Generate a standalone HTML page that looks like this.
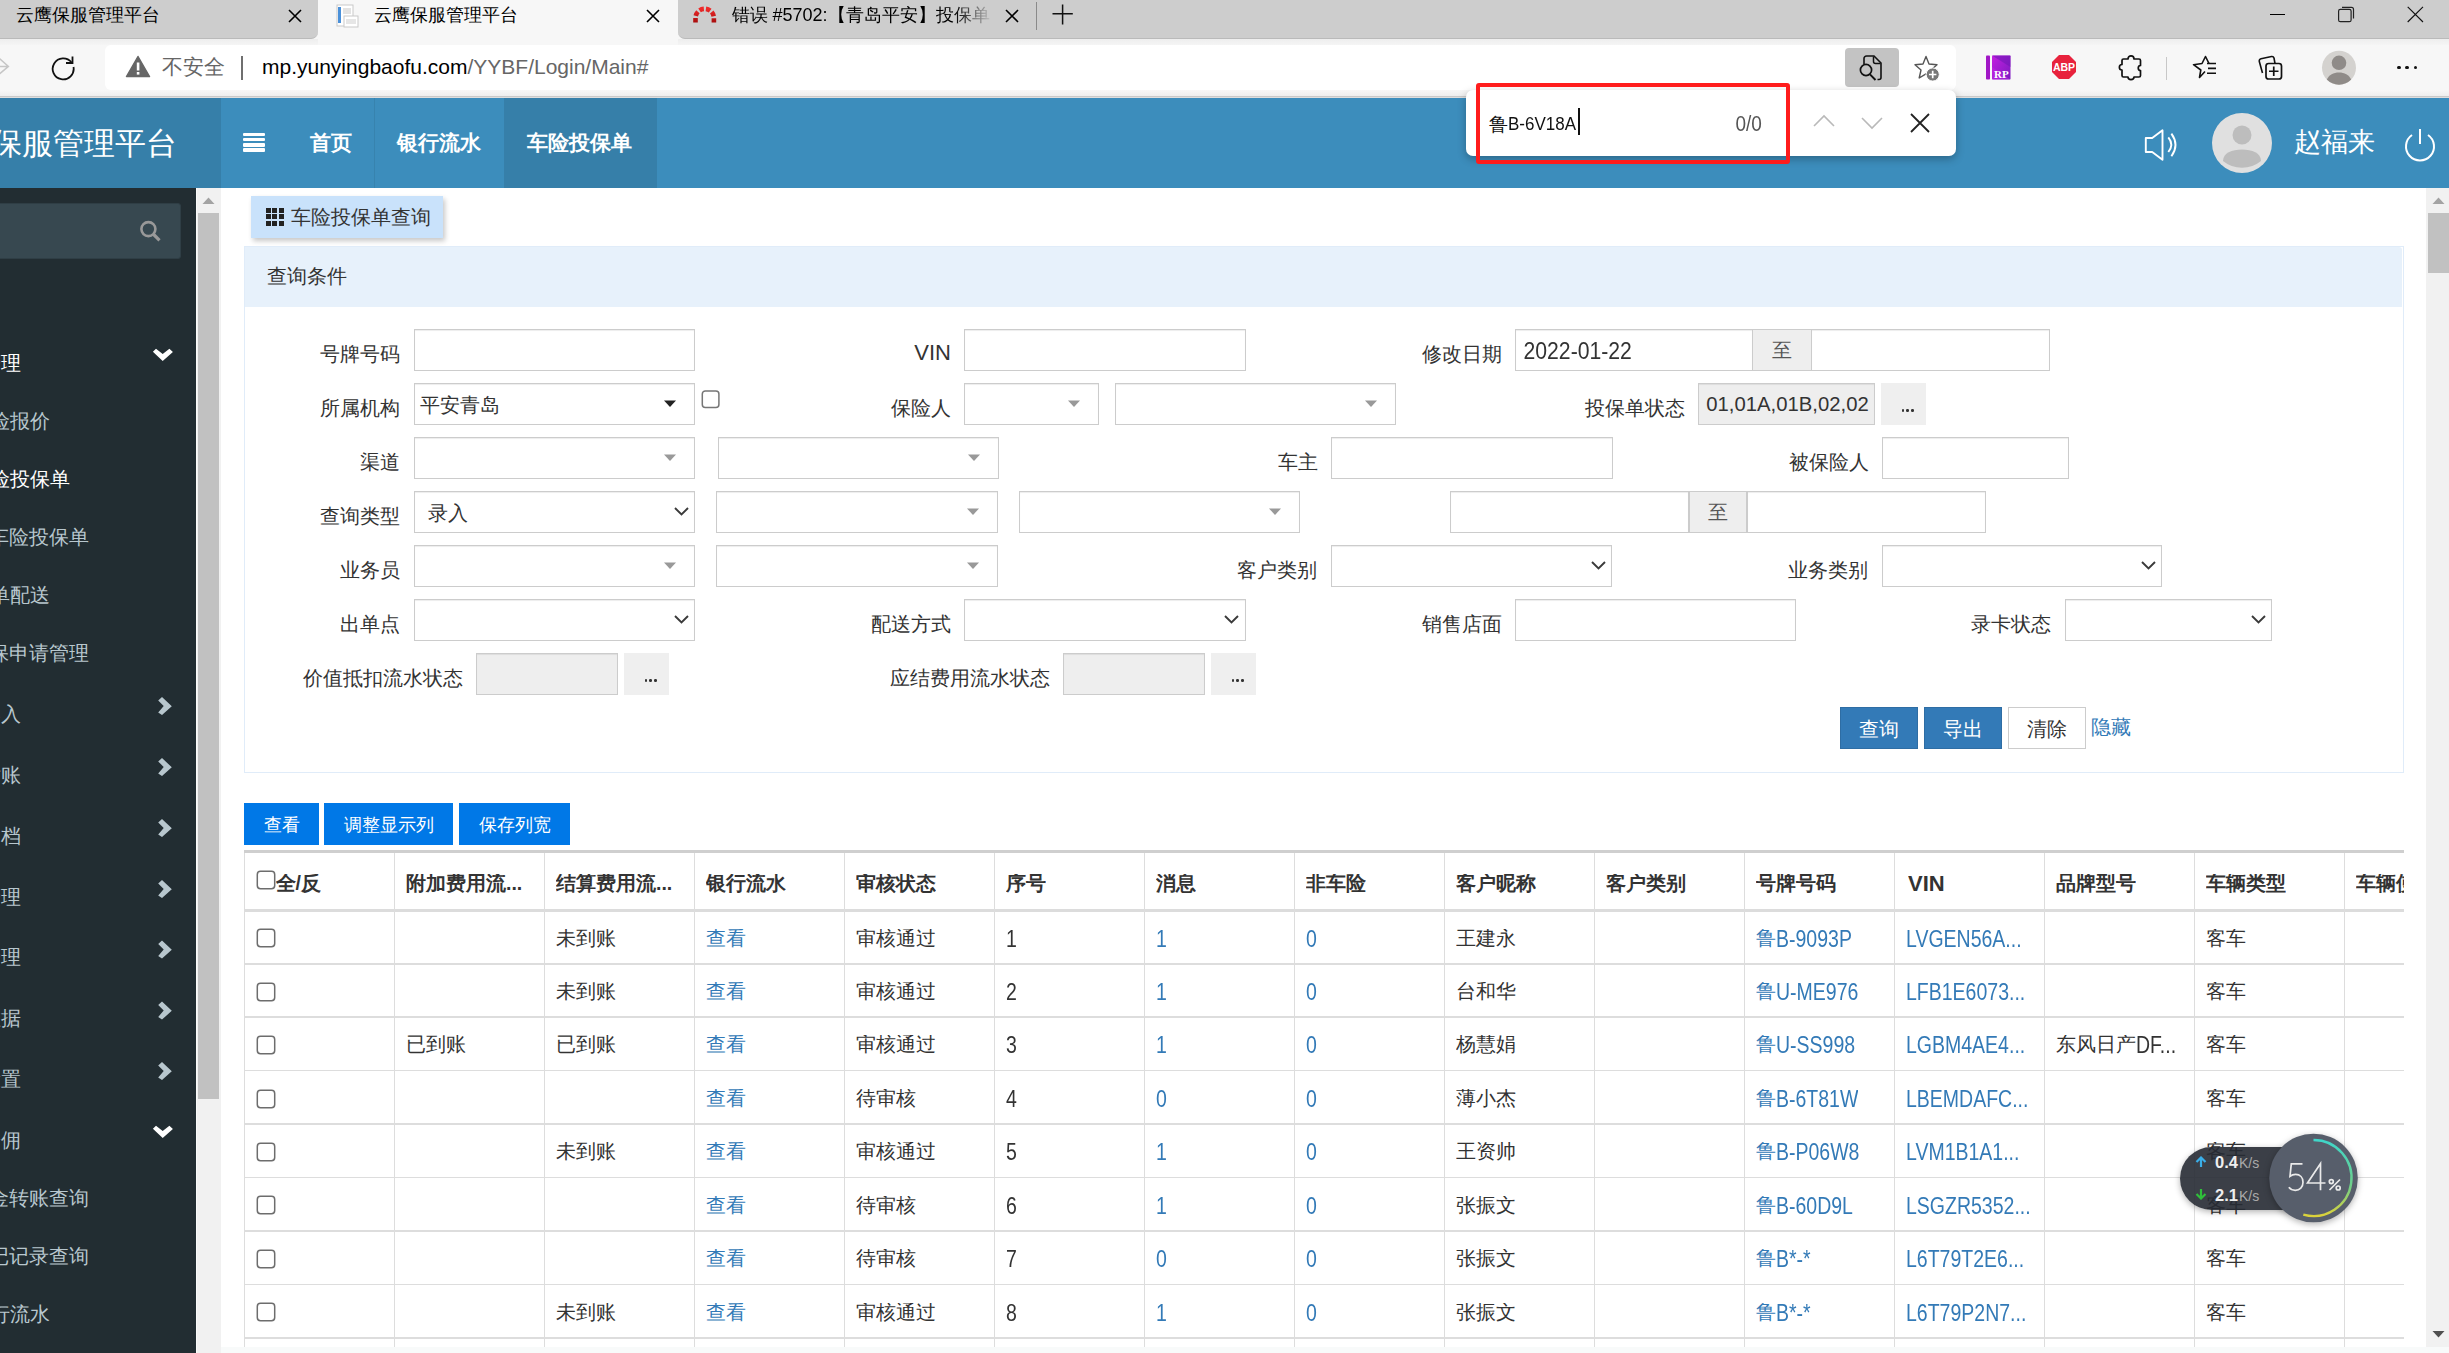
<!DOCTYPE html><html><head><meta charset="utf-8"><title>云鹰保服管理平台</title><style>
html,body{margin:0;padding:0;width:2449px;height:1353px;overflow:hidden;background:#fff;font-family:"Liberation Sans", sans-serif;}
.t{position:absolute;white-space:nowrap;}
.r{position:absolute;box-sizing:border-box;}
</style></head><body>

<div class="r" style="left:0.0px;top:0.0px;width:2449.0px;height:97.0px;background:#f7f7f7"></div>
<div class="r" style="left:0.0px;top:0.0px;width:318.0px;height:39.0px;background:#cdcdcd;border-bottom:1px solid #bababa;border-bottom-right-radius:7px"></div>
<div class="r" style="left:678.0px;top:0.0px;width:1771.0px;height:39.0px;background:#cdcdcd;border-bottom:1px solid #bababa;border-bottom-left-radius:7px"></div>
<div class="r" style="left:0.0px;top:90.0px;width:2449.0px;height:6.0px;background:linear-gradient(#f7f7f7,#eeeeee)"></div>
<div class="r" style="left:0.0px;top:39.0px;width:318.0px;height:6.0px;background:linear-gradient(#eeeeee,#f5f5f5)"></div>
<div class="r" style="left:678.0px;top:39.0px;width:1771.0px;height:6.0px;background:linear-gradient(#eeeeee,#f5f5f5)"></div>
<div class="r" style="left:0.0px;top:96.0px;width:2449.0px;height:1.0px;background:#c9c9c9"></div>
<div class="r" style="left:0.0px;top:97.0px;width:2449.0px;height:1.0px;background:#dedede"></div>
<div class="t" style="left:15.5px;top:5.5px;font-size:18px;line-height:18px;color:#000;">云鹰保服管理平台</div>
<svg class="r" style="left:288px;top:9px;" width="14" height="14" viewBox="0 0 14 14"><path d="M1 1L13 13M13 1L1 13" stroke="#000" stroke-width="1.6" fill="none"/></svg>
<svg class="r" style="left:335px;top:3px;" width="25" height="25" viewBox="0 0 25 25"><rect x="2" y="2" width="16" height="21" fill="#fff" stroke="#c9c9c9"/><rect x="3" y="4" width="3" height="16" fill="#4a90d9"/><rect x="8" y="5" width="8" height="6" fill="#e3e3e3"/><rect x="9" y="13" width="14" height="11" fill="#fff" stroke="#c9c9c9"/><rect x="11" y="16" width="10" height="5" fill="#e6e6e6"/></svg>
<div class="t" style="left:373.5px;top:5.5px;font-size:18px;line-height:18px;color:#000;">云鹰保服管理平台</div>
<svg class="r" style="left:646px;top:9px;" width="14" height="14" viewBox="0 0 14 14"><path d="M1 1L13 13M13 1L1 13" stroke="#000" stroke-width="1.6" fill="none"/></svg>
<svg class="r" style="left:691px;top:4px;" width="28" height="20" viewBox="0 0 28 20"><defs><linearGradient id="rmg" x1="0" y1="0" x2="0" y2="1"><stop offset="0" stop-color="#ee2a2a"/><stop offset="1" stop-color="#a80d0d"/></linearGradient></defs><path d="M4.5 18.5V14A9.2 9.2 0 0 1 22.9 14V18.5" stroke="url(#rmg)" stroke-width="4.6" fill="none" stroke-dasharray="4.6 2.1"/></svg>
<div class="t" style="left:731.5px;top:6.0px;font-size:18px;line-height:18px;color:#000;width:262px;overflow:hidden;-webkit-mask-image:linear-gradient(to right,#000 85%,transparent 100%);mask-image:linear-gradient(to right,#000 85%,transparent 100%)">错误 #5702:【青岛平安】投保单</div>
<svg class="r" style="left:1005px;top:9px;" width="14" height="14" viewBox="0 0 14 14"><path d="M1 1L13 13M13 1L1 13" stroke="#000" stroke-width="1.6" fill="none"/></svg>
<div class="r" style="left:1035.5px;top:2.0px;width:1.3px;height:28.0px;background:#8a8a8a"></div>
<svg class="r" style="left:1052px;top:3px;" width="22" height="22" viewBox="0 0 22 22"><path d="M10.6 1.5V21.5M0.5 10.7H20.8" stroke="#111" stroke-width="1.5" fill="none"/></svg>
<div class="r" style="left:2270.0px;top:13.6px;width:15.0px;height:1.3px;background:#000"></div>
<svg class="r" style="left:2336px;top:5px;" width="20" height="20" viewBox="0 0 20 20"><rect x="2.6" y="4.3" width="12.5" height="12.4" rx="1.8" fill="none" stroke="#222" stroke-width="1.2"/><path d="M6 2.4H15.5A2 2 0 0 1 17.5 4.4V13.5" fill="none" stroke="#222" stroke-width="1.2"/></svg>
<svg class="r" style="left:2405px;top:4px;" width="20" height="20" viewBox="0 0 20 20"><path d="M2.7 2.8L18 18M18 2.8L2.7 18" stroke="#111" stroke-width="1.15" fill="none"/></svg>
<svg class="r" style="left:0px;top:56px;" width="14" height="22" viewBox="0 0 14 22"><path d="M-1 2.2L8.4 10.4L-1 18.4M-2 10.4H8" stroke="#c6c6c6" stroke-width="1.5" fill="none"/></svg>
<svg class="r" style="left:49px;top:53px;" width="28" height="28" viewBox="0 0 28 28"><path d="M22.5 9.5A10.5 10.5 0 1 0 24.5 14" stroke="#111" stroke-width="1.8" fill="none"/><path d="M23.5 3.5V10H17" stroke="#111" stroke-width="1.8" fill="none"/></svg>
<div class="r" style="left:105.0px;top:45.0px;width:1851.0px;height:45.0px;background:#fff;border-radius:6px"></div>
<svg class="r" style="left:125px;top:55px;" width="26" height="23" viewBox="0 0 26 23"><path d="M13 1.5L24.5 21.5H1.5Z" fill="#666" stroke="#666" stroke-width="1.5" stroke-linejoin="round"/><rect x="11.8" y="7.5" width="2.6" height="8" fill="#fff"/><rect x="11.8" y="17" width="2.6" height="2.6" fill="#fff"/></svg>
<div class="t" style="left:161.5px;top:57.2px;font-size:20.5px;line-height:20.5px;color:#666;">不安全</div>
<div class="r" style="left:241.2px;top:56.0px;width:1.6px;height:24.0px;background:#6f6f6f"></div>
<div class="t" style="left:262.0px;top:56.0px;font-size:21px;line-height:21px;color:#000;"><span style="color:#000">mp.yunyingbaofu.com</span><span style="color:#666">/YYBF/Login/Main#</span></div>
<div class="r" style="left:1845.0px;top:48.0px;width:54.0px;height:38.6px;background:#c3c3c3;border-radius:4px"></div>
<svg class="r" style="left:1857px;top:54px;" width="30" height="30" viewBox="0 0 30 30"><path d="M7 10V4.5A2.5 2.5 0 0 1 9.5 2H17L24 9V23.5A2 2 0 0 1 22 25.5H20.5" stroke="#111" stroke-width="1.6" fill="none"/><path d="M16.5 2.5V7.5A2 2 0 0 0 18.5 9.5H23.5" stroke="#111" stroke-width="1.5" fill="none"/><circle cx="9" cy="16" r="5.6" stroke="#111" stroke-width="1.7" fill="none"/><path d="M13 20.3L18.5 26" stroke="#111" stroke-width="1.9" /></svg>
<svg class="r" style="left:1912px;top:53px;" width="30" height="30" viewBox="0 0 30 30"><path d="M14 3.5L17 11L25 11.8L19 17L20.8 25L14 20.8L7.2 25L9 17L3 11.8L11 11Z" fill="none" stroke="#555" stroke-width="1.4" stroke-linejoin="round"/><circle cx="20.7" cy="21.5" r="6.6" fill="#777" stroke="#fff" stroke-width="1"/><path d="M20.7 17.8V25.2M17 21.5H24.4" stroke="#fff" stroke-width="1.7"/></svg>
<svg class="r" style="left:1986px;top:55px;" width="25" height="25" viewBox="0 0 25 25"><defs><linearGradient id="rpg" x1="0" y1="0" x2="1" y2="1"><stop offset="0" stop-color="#c51fe0"/><stop offset="1" stop-color="#7a1bc0"/></linearGradient></defs><rect x="0" y="0.5" width="4" height="24" rx="0.8" fill="#a117c6"/><rect x="6" y="0.5" width="18.5" height="24" rx="0.8" fill="url(#rpg)"/><path d="M6 0.5H24.5V12Z" fill="#6e17b5" opacity=".55"/><path d="M6 12L24.5 24.5H6Z" fill="#d12cf0" opacity=".35"/><text x="8" y="23" font-family="Liberation Serif" font-weight="bold" font-size="11" fill="#fff">RP</text></svg>
<svg class="r" style="left:2051px;top:54px;" width="26" height="26" viewBox="0 0 26 26"><path d="M8 1H18L25 8V18L18 25H8L1 18V8Z" fill="#e8223d"/><text x="13" y="17.3" text-anchor="middle" font-family="Liberation Sans" font-weight="bold" font-size="10.5" fill="#fff">ABP</text></svg>
<svg class="r" style="left:2117px;top:53px;" width="28" height="28" viewBox="0 0 28 28"><path d="M11 6C11 1.8 17 1.8 17 6H22A1.5 1.5 0 0 1 23.5 7.5V12.5C20.5 12.5 20.5 17.5 23.5 17.5V22.5A1.5 1.5 0 0 1 22 24H17C17 27.5 11 27.5 11 24H6.5A1.5 1.5 0 0 1 5 22.5V17C1.5 17 1.5 11.5 5 11.5V7.5A1.5 1.5 0 0 1 6.5 6Z" fill="none" stroke="#111" stroke-width="1.7" stroke-linejoin="round"/></svg>
<div class="r" style="left:2166.2px;top:57.0px;width:1.2px;height:23.0px;background:#c8c8c8"></div>
<svg class="r" style="left:2189px;top:53px;" width="30" height="28" viewBox="0 0 30 28"><path d="M16 18.5L10.5 24.5L11.8 17L4.5 11.7L13 10.5L16.5 3.5L20 10.5" fill="none" stroke="#111" stroke-width="1.6" stroke-linejoin="round"/><path d="M18 10.5H27M19 15.4H27M18 20.2H27" stroke="#111" stroke-width="1.6"/></svg>
<svg class="r" style="left:2256px;top:54px;" width="30" height="28" viewBox="0 0 30 28"><path d="M6.5 19L3.3 7.5A2.2 2.2 0 0 1 5 4.8L15.5 2.5A2.2 2.2 0 0 1 18 4L19 9.5" fill="none" stroke="#111" stroke-width="1.6"/><rect x="10" y="9.5" width="15.5" height="15.5" rx="2.6" fill="#f7f7f7" stroke="#111" stroke-width="1.7"/><path d="M17.75 12.5V22M13 17.25H22.5" stroke="#111" stroke-width="1.7"/></svg>
<svg class="r" style="left:2321px;top:50px;" width="36" height="36" viewBox="0 0 36 36"><circle cx="18" cy="17.7" r="17" fill="#d4d2cf"/><circle cx="18" cy="12.8" r="7.3" fill="#8f8b88"/><path d="M5.8 29.5C8 25 12.5 22.5 18 22.5S28 25 30.2 29.5A17 17 0 0 1 5.8 29.5Z" fill="#8f8b88"/></svg>
<div class="r" style="left:2397.1px;top:65.6px;width:3.8px;height:3.8px;border-radius:2px;background:#111"></div>
<div class="r" style="left:2405.4px;top:65.6px;width:3.8px;height:3.8px;border-radius:2px;background:#111"></div>
<div class="r" style="left:2413.7px;top:65.6px;width:3.8px;height:3.8px;border-radius:2px;background:#111"></div>
<div class="r" style="left:0.0px;top:98.0px;width:221.0px;height:90.0px;background:#367fa9"></div>
<div class="r" style="left:221.0px;top:98.0px;width:2228.0px;height:90.0px;background:#3c8dbc"></div>
<div class="t" style="left:-423.5px;width:600px;text-align:right;top:128.2px;font-size:30.5px;line-height:30.5px;color:#fff;">云鹰保服管理平台</div>
<div class="r" style="left:243.0px;top:132.8px;width:22.0px;height:3.6px;background:#fff;border-radius:1px"></div>
<div class="r" style="left:243.0px;top:137.9px;width:22.0px;height:3.6px;background:#fff;border-radius:1px"></div>
<div class="r" style="left:243.0px;top:143.0px;width:22.0px;height:3.6px;background:#fff;border-radius:1px"></div>
<div class="r" style="left:243.0px;top:148.1px;width:22.0px;height:3.6px;background:#fff;border-radius:1px"></div>
<div class="t" style="left:309.5px;top:132.0px;font-size:21px;line-height:21px;color:#fff;font-weight:bold;">首页</div>
<div class="r" style="left:373.5px;top:98.0px;width:1.0px;height:90.0px;background:rgba(0,0,0,.07)"></div>
<div class="t" style="left:396.5px;top:132.0px;font-size:21px;line-height:21px;color:#fff;font-weight:bold;">银行流水</div>
<div class="r" style="left:504.0px;top:98.0px;width:153.0px;height:90.0px;background:#367fa9"></div>
<div class="t" style="left:526.5px;top:132.0px;font-size:21px;line-height:21px;color:#fff;font-weight:bold;">车险投保单</div>
<svg class="r" style="left:2144px;top:128px;" width="40" height="36" viewBox="0 0 40 36"><path d="M1.8 10H8.2L18.5 2.3V31.7L8.2 24H1.8Z" fill="none" stroke="#fff" stroke-width="1.9" stroke-linejoin="round"/><path d="M24.3 9.3Q30.3 16.6 24.3 24M27.4 5.6Q35.6 16.9 27.4 28.3" fill="none" stroke="#fff" stroke-width="1.9"/></svg>
<svg class="r" style="left:2212px;top:113px;" width="60" height="60" viewBox="0 0 60 60"><circle cx="30" cy="30" r="30" fill="#e0e0e0"/><circle cx="30" cy="22" r="9.5" fill="#bdbdbd"/><path d="M11 48C11 40 20 36.5 30 36.5S49 40 49 48A30 30 0 0 1 11 48Z" fill="#bdbdbd"/></svg>
<div class="t" style="left:2294.0px;top:129.0px;font-size:27px;line-height:27px;color:#fff;">赵福来</div>
<svg class="r" style="left:2403px;top:127px;" width="34" height="36" viewBox="0 0 34 36"><path d="M17 2V17" stroke="#fff" stroke-width="2" fill="none"/><path d="M9 8A14 14 0 1 0 25 8" stroke="#fff" stroke-width="2" fill="none"/></svg>
<div class="r" style="left:0.0px;top:188.0px;width:196.0px;height:1165.0px;background:#222d32"></div>
<div class="r" style="left:-10.0px;top:203.0px;width:191.0px;height:56.0px;background:#374850;border:1px solid #2f3e45;border-radius:3px"></div>
<svg class="r" style="left:136px;top:217px;" width="28" height="28" viewBox="0 0 28 28"><circle cx="12.4" cy="12.1" r="7" fill="none" stroke="#999" stroke-width="2.6"/><path d="M17.2 17L23.5 23.3" stroke="#999" stroke-width="3.2" stroke-linecap="butt"/></svg>
<div class="t" style="left:-579.4px;width:600px;text-align:right;top:353.8px;font-size:19.5px;line-height:19.5px;color:#fff;">保单管理</div>
<svg class="r" style="left:150px;top:342px;" width="26" height="24" viewBox="0 0 26 24"><polygon points="2.9,9.8 6.0,6.7 12.7,12.0 19.4,6.7 22.9,10.1 12.7,19.0" fill="#fff"/></svg>
<div class="t" style="left:-550.0px;width:600px;text-align:right;top:411.8px;font-size:19.5px;line-height:19.5px;color:#b8c7ce;">车险报价</div>
<div class="t" style="left:-530.0px;width:600px;text-align:right;top:470.2px;font-size:19.5px;line-height:19.5px;color:#fff;">车险投保单</div>
<div class="t" style="left:-511.0px;width:600px;text-align:right;top:528.2px;font-size:19.5px;line-height:19.5px;color:#b8c7ce;">非车险投保单</div>
<div class="t" style="left:-550.0px;width:600px;text-align:right;top:586.0px;font-size:19.5px;line-height:19.5px;color:#b8c7ce;">保单配送</div>
<div class="t" style="left:-511.0px;width:600px;text-align:right;top:643.8px;font-size:19.5px;line-height:19.5px;color:#b8c7ce;">退保申请管理</div>
<div class="t" style="left:-579.4px;width:600px;text-align:right;top:704.8px;font-size:19.5px;line-height:19.5px;color:#b8c7ce;">数据导入</div>
<svg class="r" style="left:150px;top:693px;" width="26" height="24" viewBox="0 0 26 24"><polygon points="8.2,7.4 12.0,4.0 21.8,13.3 12.0,22.1 8.2,19.4 13.7,13.1" fill="#b8c7ce"/></svg>
<div class="t" style="left:-579.4px;width:600px;text-align:right;top:765.8px;font-size:19.5px;line-height:19.5px;color:#b8c7ce;">财务对账</div>
<svg class="r" style="left:150px;top:754px;" width="26" height="24" viewBox="0 0 26 24"><polygon points="8.2,7.4 12.0,4.0 21.8,13.3 12.0,22.1 8.2,19.4 13.7,13.1" fill="#b8c7ce"/></svg>
<div class="t" style="left:-579.4px;width:600px;text-align:right;top:826.8px;font-size:19.5px;line-height:19.5px;color:#b8c7ce;">客户建档</div>
<svg class="r" style="left:150px;top:815px;" width="26" height="24" viewBox="0 0 26 24"><polygon points="8.2,7.4 12.0,4.0 21.8,13.3 12.0,22.1 8.2,19.4 13.7,13.1" fill="#b8c7ce"/></svg>
<div class="t" style="left:-579.4px;width:600px;text-align:right;top:887.8px;font-size:19.5px;line-height:19.5px;color:#b8c7ce;">渠道管理</div>
<svg class="r" style="left:150px;top:876px;" width="26" height="24" viewBox="0 0 26 24"><polygon points="8.2,7.4 12.0,4.0 21.8,13.3 12.0,22.1 8.2,19.4 13.7,13.1" fill="#b8c7ce"/></svg>
<div class="t" style="left:-579.4px;width:600px;text-align:right;top:948.2px;font-size:19.5px;line-height:19.5px;color:#b8c7ce;">车辆管理</div>
<svg class="r" style="left:150px;top:937px;" width="26" height="24" viewBox="0 0 26 24"><polygon points="8.2,6.9 12.0,3.5 21.8,12.8 12.0,21.6 8.2,18.9 13.7,12.6" fill="#b8c7ce"/></svg>
<div class="t" style="left:-579.4px;width:600px;text-align:right;top:1009.2px;font-size:19.5px;line-height:19.5px;color:#b8c7ce;">基础数据</div>
<svg class="r" style="left:150px;top:998px;" width="26" height="24" viewBox="0 0 26 24"><polygon points="8.2,6.9 12.0,3.5 21.8,12.8 12.0,21.6 8.2,18.9 13.7,12.6" fill="#b8c7ce"/></svg>
<div class="t" style="left:-579.4px;width:600px;text-align:right;top:1069.8px;font-size:19.5px;line-height:19.5px;color:#b8c7ce;">系统设置</div>
<svg class="r" style="left:150px;top:1058px;" width="26" height="24" viewBox="0 0 26 24"><polygon points="8.2,7.4 12.0,4.0 21.8,13.3 12.0,22.1 8.2,19.4 13.7,13.1" fill="#b8c7ce"/></svg>
<div class="t" style="left:-579.4px;width:600px;text-align:right;top:1130.8px;font-size:19.5px;line-height:19.5px;color:#b8c7ce;">分佣</div>
<svg class="r" style="left:150px;top:1119px;" width="26" height="24" viewBox="0 0 26 24"><polygon points="2.9,9.8 6.0,6.7 12.7,12.0 19.4,6.7 22.9,10.1 12.7,19.0" fill="#fff"/></svg>
<div class="t" style="left:-511.0px;width:600px;text-align:right;top:1188.8px;font-size:19.5px;line-height:19.5px;color:#b8c7ce;">资金转账查询</div>
<div class="t" style="left:-511.0px;width:600px;text-align:right;top:1246.8px;font-size:19.5px;line-height:19.5px;color:#b8c7ce;">登记记录查询</div>
<div class="t" style="left:-550.0px;width:600px;text-align:right;top:1304.8px;font-size:19.5px;line-height:19.5px;color:#b8c7ce;">银行流水</div>
<div class="r" style="left:196.0px;top:188.0px;width:25.0px;height:1165.0px;background:#f1f1f1"></div>
<div class="r" style="left:196.0px;top:188.0px;width:1.0px;height:1165.0px;background:#fafafa"></div>
<svg class="r" style="left:202px;top:196px;" width="13" height="9" viewBox="0 0 13 9"><path d="M0.5 8L6.5 1.5L12.5 8Z" fill="#a3a3a3"/></svg>
<div class="r" style="left:198.0px;top:213.0px;width:21.0px;height:886.0px;background:#c1c1c1"></div>
<div class="r" style="left:2426.0px;top:188.0px;width:23.0px;height:1159.0px;background:#f1f1f1"></div>
<svg class="r" style="left:2432px;top:196px;" width="13" height="9" viewBox="0 0 13 9"><path d="M0.5 8L6.5 1.5L12.5 8Z" fill="#a3a3a3"/></svg>
<div class="r" style="left:2428.0px;top:213.0px;width:21.0px;height:60.0px;background:#c1c1c1"></div>
<svg class="r" style="left:2432px;top:1330px;" width="13" height="9" viewBox="0 0 13 9"><path d="M0.5 1L6.5 7.5L12.5 1Z" fill="#505050"/></svg>
<div class="r" style="left:221.0px;top:1347.0px;width:2228.0px;height:6.0px;background:#f8fafa"></div>
<div class="r" style="left:251.0px;top:196.0px;width:192.0px;height:41.5px;background:#c9e2fb;box-shadow:2px 3px 5px rgba(0,0,0,.22)"></div>
<div class="r" style="left:266.0px;top:208.0px;width:4.8px;height:4.8px;background:#222"></div>
<div class="r" style="left:266.0px;top:214.4px;width:4.8px;height:4.8px;background:#222"></div>
<div class="r" style="left:266.0px;top:220.8px;width:4.8px;height:4.8px;background:#222"></div>
<div class="r" style="left:272.4px;top:208.0px;width:4.8px;height:4.8px;background:#222"></div>
<div class="r" style="left:272.4px;top:214.4px;width:4.8px;height:4.8px;background:#222"></div>
<div class="r" style="left:272.4px;top:220.8px;width:4.8px;height:4.8px;background:#222"></div>
<div class="r" style="left:278.8px;top:208.0px;width:4.8px;height:4.8px;background:#222"></div>
<div class="r" style="left:278.8px;top:214.4px;width:4.8px;height:4.8px;background:#222"></div>
<div class="r" style="left:278.8px;top:220.8px;width:4.8px;height:4.8px;background:#222"></div>
<div class="t" style="left:291.0px;top:207.8px;font-size:19.5px;line-height:19.5px;color:#333;">车险投保单查询</div>
<div class="r" style="left:244.0px;top:246.0px;width:2160.0px;height:527.0px;border:1px solid #e0ecf9;background:#fff"></div>
<div class="r" style="left:245.0px;top:247.0px;width:2157.0px;height:60.0px;background:#e7f1fb;border-top-right-radius:3px"></div>
<div class="t" style="left:266.5px;top:266.8px;font-size:19.5px;line-height:19.5px;color:#333;">查询条件</div>
<div class="t" style="left:-200.0px;width:600px;text-align:right;top:345.2px;font-size:19.5px;line-height:19.5px;color:#333;">号牌号码</div>
<div class="r" style="left:414.0px;top:329.0px;width:281.0px;height:42.0px;background:#fff;border:1px solid #ccc;box-shadow:inset 0 1px 1px rgba(0,0,0,.075)"></div>
<div class="t" style="left:351.0px;width:600px;text-align:right;top:342.0px;font-size:22px;line-height:22px;color:#333;">VIN</div>
<div class="r" style="left:964.0px;top:329.0px;width:281.6px;height:42.0px;background:#fff;border:1px solid #ccc;box-shadow:inset 0 1px 1px rgba(0,0,0,.075)"></div>
<div class="t" style="left:902.0px;width:600px;text-align:right;top:345.2px;font-size:19.5px;line-height:19.5px;color:#333;">修改日期</div>
<div class="r" style="left:1515.0px;top:329.0px;width:238.0px;height:42.0px;background:#fff;border:1px solid #ccc;box-shadow:inset 0 1px 1px rgba(0,0,0,.075)"></div>
<div class="r" style="left:1752.0px;top:329.0px;width:60.0px;height:42.0px;background:#eee;border:1px solid #ccc"></div>
<div class="t" style="left:1482.0px;width:600px;text-align:center;top:341.2px;font-size:19.5px;line-height:19.5px;color:#555;">至</div>
<div class="r" style="left:1811.0px;top:329.0px;width:239.0px;height:42.0px;background:#fff;border:1px solid #ccc;box-shadow:inset 0 1px 1px rgba(0,0,0,.075)"></div>
<div class="t" style="left:1523.5px;top:339.4px;font-size:21.2px;line-height:21.2px;color:#333;"><span style="display:inline-block;transform:scaleY(1.15);transform-origin:0 3px">2022-01-22</span></div>
<div class="t" style="left:-200.0px;width:600px;text-align:right;top:399.2px;font-size:19.5px;line-height:19.5px;color:#333;">所属机构</div>
<div class="r" style="left:414.0px;top:383.0px;width:281.0px;height:42.0px;background:#fff;border:1px solid #ccc;box-shadow:inset 0 1px 1px rgba(0,0,0,.075)"></div>
<svg class="r" style="left:663px;top:399px;" width="13" height="9" viewBox="0 0 13 9"><path d="M1 1.5H13L7 8Z" fill="#222"/></svg>
<div class="t" style="left:420.0px;top:395.8px;font-size:19.5px;line-height:19.5px;color:#333;">平安青岛</div>
<svg class="r" style="left:701px;top:390px;" width="19" height="19" viewBox="0 0 19 19"><rect x="1.3" y="0.9" width="16.6" height="16.6" rx="3" fill="#fff" stroke="#767676" stroke-width="1.5"/></svg>
<div class="t" style="left:350.7px;width:600px;text-align:right;top:399.2px;font-size:19.5px;line-height:19.5px;color:#333;">保险人</div>
<div class="r" style="left:964.0px;top:383.0px;width:134.6px;height:42.0px;background:#fff;border:1px solid #ccc;box-shadow:inset 0 1px 1px rgba(0,0,0,.075)"></div>
<svg class="r" style="left:1067px;top:399px;" width="13" height="9" viewBox="0 0 13 9"><path d="M1 1.5H13L7 8Z" fill="#999"/></svg>
<div class="r" style="left:1115.3px;top:383.0px;width:280.3px;height:42.0px;background:#fff;border:1px solid #ccc;box-shadow:inset 0 1px 1px rgba(0,0,0,.075)"></div>
<svg class="r" style="left:1364px;top:399px;" width="13" height="9" viewBox="0 0 13 9"><path d="M1 1.5H13L7 8Z" fill="#999"/></svg>
<div class="t" style="left:1085.0px;width:600px;text-align:right;top:399.2px;font-size:19.5px;line-height:19.5px;color:#333;">投保单状态</div>
<div class="r" style="left:1698.0px;top:383.0px;width:177.0px;height:42.0px;background:#eee;border:1px solid #ccc;box-shadow:inset 0 1px 1px rgba(0,0,0,.075)"></div>
<div class="t" style="left:1706.3px;top:394.4px;font-size:20.3px;line-height:20.3px;color:#333;">01,01A,01B,02,02</div>
<div class="r" style="left:1881.0px;top:383.0px;width:45.0px;height:42.0px;background:#efefef"></div>
<div class="r" style="left:1901.6px;top:408.9px;width:2.5px;height:3.0px;background:#333;border-radius:1.2px"></div>
<div class="r" style="left:1906.4px;top:408.9px;width:2.5px;height:3.0px;background:#333;border-radius:1.2px"></div>
<div class="r" style="left:1911.2px;top:408.9px;width:2.5px;height:3.0px;background:#333;border-radius:1.2px"></div>
<div class="t" style="left:-200.0px;width:600px;text-align:right;top:453.2px;font-size:19.5px;line-height:19.5px;color:#333;">渠道</div>
<div class="r" style="left:414.0px;top:437.0px;width:281.0px;height:42.0px;background:#fff;border:1px solid #ccc;box-shadow:inset 0 1px 1px rgba(0,0,0,.075)"></div>
<svg class="r" style="left:663px;top:453px;" width="13" height="9" viewBox="0 0 13 9"><path d="M1 1.5H13L7 8Z" fill="#999"/></svg>
<div class="r" style="left:718.0px;top:437.0px;width:280.7px;height:42.0px;background:#fff;border:1px solid #ccc;box-shadow:inset 0 1px 1px rgba(0,0,0,.075)"></div>
<svg class="r" style="left:967px;top:453px;" width="13" height="9" viewBox="0 0 13 9"><path d="M1 1.5H13L7 8Z" fill="#999"/></svg>
<div class="t" style="left:717.5px;width:600px;text-align:right;top:453.2px;font-size:19.5px;line-height:19.5px;color:#333;">车主</div>
<div class="r" style="left:1331.0px;top:437.0px;width:281.8px;height:42.0px;background:#fff;border:1px solid #ccc;box-shadow:inset 0 1px 1px rgba(0,0,0,.075)"></div>
<div class="t" style="left:1268.5px;width:600px;text-align:right;top:453.2px;font-size:19.5px;line-height:19.5px;color:#333;">被保险人</div>
<div class="r" style="left:1882.0px;top:437.0px;width:186.6px;height:42.0px;background:#fff;border:1px solid #ccc;box-shadow:inset 0 1px 1px rgba(0,0,0,.075)"></div>
<div class="t" style="left:-200.0px;width:600px;text-align:right;top:507.2px;font-size:19.5px;line-height:19.5px;color:#333;">查询类型</div>
<div class="r" style="left:414.0px;top:491.0px;width:281.0px;height:42.0px;background:#fff;border:1px solid #ccc;box-shadow:inset 0 1px 1px rgba(0,0,0,.075)"></div>
<svg class="r" style="left:674px;top:506px;" width="15" height="11" viewBox="0 0 15 11"><path d="M1 2L7.5 8.5L14 2" fill="none" stroke="#3a3a3a" stroke-width="1.9"/></svg>
<div class="t" style="left:427.5px;top:504.2px;font-size:19.5px;line-height:19.5px;color:#333;">录入</div>
<div class="r" style="left:716.0px;top:491.0px;width:281.7px;height:42.0px;background:#fff;border:1px solid #ccc;box-shadow:inset 0 1px 1px rgba(0,0,0,.075)"></div>
<svg class="r" style="left:966px;top:507px;" width="13" height="9" viewBox="0 0 13 9"><path d="M1 1.5H13L7 8Z" fill="#999"/></svg>
<div class="r" style="left:1019.0px;top:491.0px;width:281.0px;height:42.0px;background:#fff;border:1px solid #ccc;box-shadow:inset 0 1px 1px rgba(0,0,0,.075)"></div>
<svg class="r" style="left:1268px;top:507px;" width="13" height="9" viewBox="0 0 13 9"><path d="M1 1.5H13L7 8Z" fill="#999"/></svg>
<div class="r" style="left:1450.3px;top:491.0px;width:238.7px;height:42.0px;background:#fff;border:1px solid #ccc;box-shadow:inset 0 1px 1px rgba(0,0,0,.075)"></div>
<div class="r" style="left:1688.7px;top:491.0px;width:58.6px;height:42.0px;background:#eee;border:1px solid #ccc"></div>
<div class="t" style="left:1418.0px;width:600px;text-align:center;top:503.2px;font-size:19.5px;line-height:19.5px;color:#555;">至</div>
<div class="r" style="left:1747.0px;top:491.0px;width:238.7px;height:42.0px;background:#fff;border:1px solid #ccc;box-shadow:inset 0 1px 1px rgba(0,0,0,.075)"></div>
<div class="t" style="left:-200.0px;width:600px;text-align:right;top:561.2px;font-size:19.5px;line-height:19.5px;color:#333;">业务员</div>
<div class="r" style="left:414.0px;top:545.0px;width:281.0px;height:42.0px;background:#fff;border:1px solid #ccc;box-shadow:inset 0 1px 1px rgba(0,0,0,.075)"></div>
<svg class="r" style="left:663px;top:561px;" width="13" height="9" viewBox="0 0 13 9"><path d="M1 1.5H13L7 8Z" fill="#999"/></svg>
<div class="r" style="left:716.0px;top:545.0px;width:281.7px;height:42.0px;background:#fff;border:1px solid #ccc;box-shadow:inset 0 1px 1px rgba(0,0,0,.075)"></div>
<svg class="r" style="left:966px;top:561px;" width="13" height="9" viewBox="0 0 13 9"><path d="M1 1.5H13L7 8Z" fill="#999"/></svg>
<div class="t" style="left:717.3px;width:600px;text-align:right;top:561.2px;font-size:19.5px;line-height:19.5px;color:#333;">客户类别</div>
<div class="r" style="left:1331.3px;top:545.0px;width:281.2px;height:42.0px;background:#fff;border:1px solid #ccc;box-shadow:inset 0 1px 1px rgba(0,0,0,.075)"></div>
<svg class="r" style="left:1591px;top:560px;" width="15" height="11" viewBox="0 0 15 11"><path d="M1 2L7.5 8.5L14 2" fill="none" stroke="#3a3a3a" stroke-width="1.9"/></svg>
<div class="t" style="left:1268.0px;width:600px;text-align:right;top:561.2px;font-size:19.5px;line-height:19.5px;color:#333;">业务类别</div>
<div class="r" style="left:1882.0px;top:545.0px;width:280.4px;height:42.0px;background:#fff;border:1px solid #ccc;box-shadow:inset 0 1px 1px rgba(0,0,0,.075)"></div>
<svg class="r" style="left:2141px;top:560px;" width="15" height="11" viewBox="0 0 15 11"><path d="M1 2L7.5 8.5L14 2" fill="none" stroke="#3a3a3a" stroke-width="1.9"/></svg>
<div class="t" style="left:-200.0px;width:600px;text-align:right;top:615.2px;font-size:19.5px;line-height:19.5px;color:#333;">出单点</div>
<div class="r" style="left:414.0px;top:599.0px;width:281.0px;height:42.0px;background:#fff;border:1px solid #ccc;box-shadow:inset 0 1px 1px rgba(0,0,0,.075)"></div>
<svg class="r" style="left:674px;top:614px;" width="15" height="11" viewBox="0 0 15 11"><path d="M1 2L7.5 8.5L14 2" fill="none" stroke="#3a3a3a" stroke-width="1.9"/></svg>
<div class="t" style="left:350.7px;width:600px;text-align:right;top:615.2px;font-size:19.5px;line-height:19.5px;color:#333;">配送方式</div>
<div class="r" style="left:964.0px;top:599.0px;width:281.8px;height:42.0px;background:#fff;border:1px solid #ccc;box-shadow:inset 0 1px 1px rgba(0,0,0,.075)"></div>
<svg class="r" style="left:1224px;top:614px;" width="15" height="11" viewBox="0 0 15 11"><path d="M1 2L7.5 8.5L14 2" fill="none" stroke="#3a3a3a" stroke-width="1.9"/></svg>
<div class="t" style="left:901.8px;width:600px;text-align:right;top:615.2px;font-size:19.5px;line-height:19.5px;color:#333;">销售店面</div>
<div class="r" style="left:1515.3px;top:599.0px;width:280.4px;height:42.0px;background:#fff;border:1px solid #ccc;box-shadow:inset 0 1px 1px rgba(0,0,0,.075)"></div>
<div class="t" style="left:1451.2px;width:600px;text-align:right;top:615.2px;font-size:19.5px;line-height:19.5px;color:#333;">录卡状态</div>
<div class="r" style="left:2065.2px;top:599.0px;width:207.1px;height:42.0px;background:#fff;border:1px solid #ccc;box-shadow:inset 0 1px 1px rgba(0,0,0,.075)"></div>
<svg class="r" style="left:2251px;top:614px;" width="15" height="11" viewBox="0 0 15 11"><path d="M1 2L7.5 8.5L14 2" fill="none" stroke="#3a3a3a" stroke-width="1.9"/></svg>
<div class="t" style="left:-137.0px;width:600px;text-align:right;top:669.2px;font-size:19.5px;line-height:19.5px;color:#333;">价值抵扣流水状态</div>
<div class="r" style="left:476.3px;top:653.0px;width:141.5px;height:42.0px;background:#eee;border:1px solid #ccc;box-shadow:inset 0 1px 1px rgba(0,0,0,.075)"></div>
<div class="r" style="left:624.0px;top:653.0px;width:44.7px;height:42.0px;background:#efefef"></div>
<div class="r" style="left:644.6px;top:678.9px;width:2.5px;height:3.0px;background:#333;border-radius:1.2px"></div>
<div class="r" style="left:649.4px;top:678.9px;width:2.5px;height:3.0px;background:#333;border-radius:1.2px"></div>
<div class="r" style="left:654.2px;top:678.9px;width:2.5px;height:3.0px;background:#333;border-radius:1.2px"></div>
<div class="t" style="left:449.7px;width:600px;text-align:right;top:669.2px;font-size:19.5px;line-height:19.5px;color:#333;">应结费用流水状态</div>
<div class="r" style="left:1063.0px;top:653.0px;width:142.0px;height:42.0px;background:#eee;border:1px solid #ccc;box-shadow:inset 0 1px 1px rgba(0,0,0,.075)"></div>
<div class="r" style="left:1211.0px;top:653.0px;width:45.0px;height:42.0px;background:#efefef"></div>
<div class="r" style="left:1231.6px;top:678.9px;width:2.5px;height:3.0px;background:#333;border-radius:1.2px"></div>
<div class="r" style="left:1236.4px;top:678.9px;width:2.5px;height:3.0px;background:#333;border-radius:1.2px"></div>
<div class="r" style="left:1241.2px;top:678.9px;width:2.5px;height:3.0px;background:#333;border-radius:1.2px"></div>
<div class="r" style="left:1840.0px;top:707.0px;width:78.0px;height:41.5px;background:#337ab7;border:1px solid #2e6da4"></div>
<div class="t" style="left:1579.0px;width:600px;text-align:center;top:719.8px;font-size:19.5px;line-height:19.5px;color:#fff;">查询</div>
<div class="r" style="left:1924.0px;top:707.0px;width:77.5px;height:41.5px;background:#337ab7;border:1px solid #2e6da4"></div>
<div class="t" style="left:1662.7px;width:600px;text-align:center;top:719.8px;font-size:19.5px;line-height:19.5px;color:#fff;">导出</div>
<div class="r" style="left:2008.0px;top:707.0px;width:77.5px;height:41.5px;background:#fff;border:1px solid #ccc"></div>
<div class="t" style="left:1746.7px;width:600px;text-align:center;top:719.8px;font-size:19.5px;line-height:19.5px;color:#333;">清除</div>
<div class="t" style="left:2090.5px;top:717.8px;font-size:19.5px;line-height:19.5px;color:#337ab7;">隐藏</div>
<div class="r" style="left:244.0px;top:803.0px;width:75.0px;height:42.0px;background:#0078e7"></div>
<div class="t" style="left:-18.5px;width:600px;text-align:center;top:815.5px;font-size:18px;line-height:18px;color:#fff;">查看</div>
<div class="r" style="left:324.0px;top:803.0px;width:129.0px;height:42.0px;background:#0078e7"></div>
<div class="t" style="left:88.5px;width:600px;text-align:center;top:815.5px;font-size:18px;line-height:18px;color:#fff;">调整显示列</div>
<div class="r" style="left:459.0px;top:803.0px;width:111.0px;height:42.0px;background:#0078e7"></div>
<div class="t" style="left:214.5px;width:600px;text-align:center;top:815.5px;font-size:18px;line-height:18px;color:#fff;">保存列宽</div>
<div class="r" style="left:244px;top:850px;width:2160px;height:497px;overflow:hidden">
<div class="r" style="left:0.0px;top:0.0px;width:2160.0px;height:3.0px;background:#cfcfcf"></div>
<div class="r" style="left:0.0px;top:59.0px;width:2160.0px;height:3.0px;background:#dcdcdc"></div>
<div class="r" style="left:0.0px;top:113.0px;width:2160.0px;height:1.5px;background:#dddddd"></div>
<div class="r" style="left:0.0px;top:166.4px;width:2160.0px;height:1.5px;background:#dddddd"></div>
<div class="r" style="left:0.0px;top:219.9px;width:2160.0px;height:1.5px;background:#dddddd"></div>
<div class="r" style="left:0.0px;top:273.3px;width:2160.0px;height:1.5px;background:#dddddd"></div>
<div class="r" style="left:0.0px;top:326.7px;width:2160.0px;height:1.5px;background:#dddddd"></div>
<div class="r" style="left:0.0px;top:380.2px;width:2160.0px;height:1.5px;background:#dddddd"></div>
<div class="r" style="left:0.0px;top:433.6px;width:2160.0px;height:1.5px;background:#dddddd"></div>
<div class="r" style="left:0.0px;top:487.0px;width:2160.0px;height:1.5px;background:#dddddd"></div>
<div class="r" style="left:0.0px;top:3.0px;width:1.2px;height:494.0px;background:#dddddd"></div>
<div class="r" style="left:150.0px;top:3.0px;width:1.2px;height:494.0px;background:#dddddd"></div>
<div class="r" style="left:300.0px;top:3.0px;width:1.2px;height:494.0px;background:#dddddd"></div>
<div class="r" style="left:450.0px;top:3.0px;width:1.2px;height:494.0px;background:#dddddd"></div>
<div class="r" style="left:600.0px;top:3.0px;width:1.2px;height:494.0px;background:#dddddd"></div>
<div class="r" style="left:750.0px;top:3.0px;width:1.2px;height:494.0px;background:#dddddd"></div>
<div class="r" style="left:900.0px;top:3.0px;width:1.2px;height:494.0px;background:#dddddd"></div>
<div class="r" style="left:1050.0px;top:3.0px;width:1.2px;height:494.0px;background:#dddddd"></div>
<div class="r" style="left:1200.0px;top:3.0px;width:1.2px;height:494.0px;background:#dddddd"></div>
<div class="r" style="left:1350.0px;top:3.0px;width:1.2px;height:494.0px;background:#dddddd"></div>
<div class="r" style="left:1500.0px;top:3.0px;width:1.2px;height:494.0px;background:#dddddd"></div>
<div class="r" style="left:1650.0px;top:3.0px;width:1.2px;height:494.0px;background:#dddddd"></div>
<div class="r" style="left:1800.0px;top:3.0px;width:1.2px;height:494.0px;background:#dddddd"></div>
<div class="r" style="left:1950.0px;top:3.0px;width:1.2px;height:494.0px;background:#dddddd"></div>
<div class="r" style="left:2100.0px;top:3.0px;width:1.2px;height:494.0px;background:#dddddd"></div>
</div>
<svg class="r" style="left:256px;top:870px;" width="20" height="20" viewBox="0 0 20 20"><rect x="1.3" y="1.3" width="17.4" height="17.4" rx="3.2" fill="#fff" stroke="#6d6d6d" stroke-width="1.5"/></svg>
<div class="t" style="left:275.5px;top:874.2px;font-size:19.5px;line-height:19.5px;color:#333;font-weight:bold;max-width:2128.5px;overflow:hidden">全/反</div>
<div class="t" style="left:406.0px;top:874.2px;font-size:19.5px;line-height:19.5px;color:#333;font-weight:bold;max-width:1998.0px;overflow:hidden">附加费用流...</div>
<div class="t" style="left:556.0px;top:874.2px;font-size:19.5px;line-height:19.5px;color:#333;font-weight:bold;max-width:1848.0px;overflow:hidden">结算费用流...</div>
<div class="t" style="left:706.0px;top:874.2px;font-size:19.5px;line-height:19.5px;color:#333;font-weight:bold;max-width:1698.0px;overflow:hidden">银行流水</div>
<div class="t" style="left:856.0px;top:874.2px;font-size:19.5px;line-height:19.5px;color:#333;font-weight:bold;max-width:1548.0px;overflow:hidden">审核状态</div>
<div class="t" style="left:1006.0px;top:874.2px;font-size:19.5px;line-height:19.5px;color:#333;font-weight:bold;max-width:1398.0px;overflow:hidden">序号</div>
<div class="t" style="left:1156.0px;top:874.2px;font-size:19.5px;line-height:19.5px;color:#333;font-weight:bold;max-width:1248.0px;overflow:hidden">消息</div>
<div class="t" style="left:1306.0px;top:874.2px;font-size:19.5px;line-height:19.5px;color:#333;font-weight:bold;max-width:1098.0px;overflow:hidden">非车险</div>
<div class="t" style="left:1456.0px;top:874.2px;font-size:19.5px;line-height:19.5px;color:#333;font-weight:bold;max-width:948.0px;overflow:hidden">客户昵称</div>
<div class="t" style="left:1606.0px;top:874.2px;font-size:19.5px;line-height:19.5px;color:#333;font-weight:bold;max-width:798.0px;overflow:hidden">客户类别</div>
<div class="t" style="left:1756.0px;top:874.2px;font-size:19.5px;line-height:19.5px;color:#333;font-weight:bold;max-width:648.0px;overflow:hidden">号牌号码</div>
<div class="t" style="left:1908.0px;top:873.0px;font-size:22px;line-height:22px;color:#333;font-weight:bold;max-width:496.0px;overflow:hidden">VIN</div>
<div class="t" style="left:2056.0px;top:874.2px;font-size:19.5px;line-height:19.5px;color:#333;font-weight:bold;max-width:348.0px;overflow:hidden">品牌型号</div>
<div class="t" style="left:2206.0px;top:874.2px;font-size:19.5px;line-height:19.5px;color:#333;font-weight:bold;max-width:198.0px;overflow:hidden">车辆类型</div>
<div class="t" style="left:2356.0px;top:874.2px;font-size:19.5px;line-height:19.5px;color:#333;font-weight:bold;max-width:48.0px;overflow:hidden">车辆使用性质</div>
<svg class="r" style="left:256px;top:928px;" width="20" height="20" viewBox="0 0 20 20"><rect x="1.3" y="1.3" width="17.4" height="17.4" rx="3.2" fill="#fff" stroke="#6d6d6d" stroke-width="1.5"/></svg>
<div class="t" style="left:556.0px;top:928.5px;font-size:19.5px;line-height:19.5px;color:#333;max-width:1848.0px;overflow:hidden">未到账</div>
<div class="t" style="left:706.0px;top:928.5px;font-size:19.5px;line-height:19.5px;color:#337ab7;max-width:1698.0px;overflow:hidden">查看</div>
<div class="t" style="left:856.0px;top:928.5px;font-size:19.5px;line-height:19.5px;color:#333;max-width:1548.0px;overflow:hidden">审核通过</div>
<div class="t" style="left:1006.0px;top:928.5px;font-size:19.5px;line-height:19.5px;color:#333;max-width:1398.0px;overflow:hidden"><span style="display:inline-block;transform:scaleY(1.18);transform-origin:0 3px">1</span></div>
<div class="t" style="left:1156.0px;top:928.5px;font-size:19.5px;line-height:19.5px;color:#337ab7;max-width:1248.0px;overflow:hidden"><span style="display:inline-block;transform:scaleY(1.18);transform-origin:0 3px">1</span></div>
<div class="t" style="left:1306.0px;top:928.5px;font-size:19.5px;line-height:19.5px;color:#337ab7;max-width:1098.0px;overflow:hidden"><span style="display:inline-block;transform:scaleY(1.18);transform-origin:0 3px">0</span></div>
<div class="t" style="left:1456.0px;top:928.5px;font-size:19.5px;line-height:19.5px;color:#333;max-width:948.0px;overflow:hidden">王建永</div>
<div class="t" style="left:1756.0px;top:928.5px;font-size:19.5px;line-height:19.5px;color:#337ab7;max-width:648.0px;overflow:hidden">鲁<span style="display:inline-block;transform:scaleY(1.18);transform-origin:0 3px">B-9093P</span></div>
<div class="t" style="left:1906.0px;top:928.5px;font-size:19.5px;line-height:19.5px;color:#337ab7;max-width:498.0px;overflow:hidden"><span style="display:inline-block;transform:scaleY(1.18);transform-origin:0 3px">LVGEN56A...</span></div>
<div class="t" style="left:2206.0px;top:928.5px;font-size:19.5px;line-height:19.5px;color:#333;max-width:198.0px;overflow:hidden">客车</div>
<svg class="r" style="left:256px;top:982px;" width="20" height="20" viewBox="0 0 20 20"><rect x="1.3" y="1.3" width="17.4" height="17.4" rx="3.2" fill="#fff" stroke="#6d6d6d" stroke-width="1.5"/></svg>
<div class="t" style="left:556.0px;top:982.0px;font-size:19.5px;line-height:19.5px;color:#333;max-width:1848.0px;overflow:hidden">未到账</div>
<div class="t" style="left:706.0px;top:982.0px;font-size:19.5px;line-height:19.5px;color:#337ab7;max-width:1698.0px;overflow:hidden">查看</div>
<div class="t" style="left:856.0px;top:982.0px;font-size:19.5px;line-height:19.5px;color:#333;max-width:1548.0px;overflow:hidden">审核通过</div>
<div class="t" style="left:1006.0px;top:982.0px;font-size:19.5px;line-height:19.5px;color:#333;max-width:1398.0px;overflow:hidden"><span style="display:inline-block;transform:scaleY(1.18);transform-origin:0 3px">2</span></div>
<div class="t" style="left:1156.0px;top:982.0px;font-size:19.5px;line-height:19.5px;color:#337ab7;max-width:1248.0px;overflow:hidden"><span style="display:inline-block;transform:scaleY(1.18);transform-origin:0 3px">1</span></div>
<div class="t" style="left:1306.0px;top:982.0px;font-size:19.5px;line-height:19.5px;color:#337ab7;max-width:1098.0px;overflow:hidden"><span style="display:inline-block;transform:scaleY(1.18);transform-origin:0 3px">0</span></div>
<div class="t" style="left:1456.0px;top:982.0px;font-size:19.5px;line-height:19.5px;color:#333;max-width:948.0px;overflow:hidden">台和华</div>
<div class="t" style="left:1756.0px;top:982.0px;font-size:19.5px;line-height:19.5px;color:#337ab7;max-width:648.0px;overflow:hidden">鲁<span style="display:inline-block;transform:scaleY(1.18);transform-origin:0 3px">U-ME976</span></div>
<div class="t" style="left:1906.0px;top:982.0px;font-size:19.5px;line-height:19.5px;color:#337ab7;max-width:498.0px;overflow:hidden"><span style="display:inline-block;transform:scaleY(1.18);transform-origin:0 3px">LFB1E6073...</span></div>
<div class="t" style="left:2206.0px;top:982.0px;font-size:19.5px;line-height:19.5px;color:#333;max-width:198.0px;overflow:hidden">客车</div>
<svg class="r" style="left:256px;top:1035px;" width="20" height="20" viewBox="0 0 20 20"><rect x="1.3" y="1.3" width="17.4" height="17.4" rx="3.2" fill="#fff" stroke="#6d6d6d" stroke-width="1.5"/></svg>
<div class="t" style="left:406.0px;top:1035.4px;font-size:19.5px;line-height:19.5px;color:#333;max-width:1998.0px;overflow:hidden">已到账</div>
<div class="t" style="left:556.0px;top:1035.4px;font-size:19.5px;line-height:19.5px;color:#333;max-width:1848.0px;overflow:hidden">已到账</div>
<div class="t" style="left:706.0px;top:1035.4px;font-size:19.5px;line-height:19.5px;color:#337ab7;max-width:1698.0px;overflow:hidden">查看</div>
<div class="t" style="left:856.0px;top:1035.4px;font-size:19.5px;line-height:19.5px;color:#333;max-width:1548.0px;overflow:hidden">审核通过</div>
<div class="t" style="left:1006.0px;top:1035.4px;font-size:19.5px;line-height:19.5px;color:#333;max-width:1398.0px;overflow:hidden"><span style="display:inline-block;transform:scaleY(1.18);transform-origin:0 3px">3</span></div>
<div class="t" style="left:1156.0px;top:1035.4px;font-size:19.5px;line-height:19.5px;color:#337ab7;max-width:1248.0px;overflow:hidden"><span style="display:inline-block;transform:scaleY(1.18);transform-origin:0 3px">1</span></div>
<div class="t" style="left:1306.0px;top:1035.4px;font-size:19.5px;line-height:19.5px;color:#337ab7;max-width:1098.0px;overflow:hidden"><span style="display:inline-block;transform:scaleY(1.18);transform-origin:0 3px">0</span></div>
<div class="t" style="left:1456.0px;top:1035.4px;font-size:19.5px;line-height:19.5px;color:#333;max-width:948.0px;overflow:hidden">杨慧娟</div>
<div class="t" style="left:1756.0px;top:1035.4px;font-size:19.5px;line-height:19.5px;color:#337ab7;max-width:648.0px;overflow:hidden">鲁<span style="display:inline-block;transform:scaleY(1.18);transform-origin:0 3px">U-SS998</span></div>
<div class="t" style="left:1906.0px;top:1035.4px;font-size:19.5px;line-height:19.5px;color:#337ab7;max-width:498.0px;overflow:hidden"><span style="display:inline-block;transform:scaleY(1.18);transform-origin:0 3px">LGBM4AE4...</span></div>
<div class="t" style="left:2056.0px;top:1035.4px;font-size:19.5px;line-height:19.5px;color:#333;max-width:348.0px;overflow:hidden">东风日产<span style="display:inline-block;transform:scaleY(1.18);transform-origin:0 3px">DF...</span></div>
<div class="t" style="left:2206.0px;top:1035.4px;font-size:19.5px;line-height:19.5px;color:#333;max-width:198.0px;overflow:hidden">客车</div>
<svg class="r" style="left:256px;top:1089px;" width="20" height="20" viewBox="0 0 20 20"><rect x="1.3" y="1.3" width="17.4" height="17.4" rx="3.2" fill="#fff" stroke="#6d6d6d" stroke-width="1.5"/></svg>
<div class="t" style="left:706.0px;top:1088.8px;font-size:19.5px;line-height:19.5px;color:#337ab7;max-width:1698.0px;overflow:hidden">查看</div>
<div class="t" style="left:856.0px;top:1088.8px;font-size:19.5px;line-height:19.5px;color:#333;max-width:1548.0px;overflow:hidden">待审核</div>
<div class="t" style="left:1006.0px;top:1088.8px;font-size:19.5px;line-height:19.5px;color:#333;max-width:1398.0px;overflow:hidden"><span style="display:inline-block;transform:scaleY(1.18);transform-origin:0 3px">4</span></div>
<div class="t" style="left:1156.0px;top:1088.8px;font-size:19.5px;line-height:19.5px;color:#337ab7;max-width:1248.0px;overflow:hidden"><span style="display:inline-block;transform:scaleY(1.18);transform-origin:0 3px">0</span></div>
<div class="t" style="left:1306.0px;top:1088.8px;font-size:19.5px;line-height:19.5px;color:#337ab7;max-width:1098.0px;overflow:hidden"><span style="display:inline-block;transform:scaleY(1.18);transform-origin:0 3px">0</span></div>
<div class="t" style="left:1456.0px;top:1088.8px;font-size:19.5px;line-height:19.5px;color:#333;max-width:948.0px;overflow:hidden">薄小杰</div>
<div class="t" style="left:1756.0px;top:1088.8px;font-size:19.5px;line-height:19.5px;color:#337ab7;max-width:648.0px;overflow:hidden">鲁<span style="display:inline-block;transform:scaleY(1.18);transform-origin:0 3px">B-6T81W</span></div>
<div class="t" style="left:1906.0px;top:1088.8px;font-size:19.5px;line-height:19.5px;color:#337ab7;max-width:498.0px;overflow:hidden"><span style="display:inline-block;transform:scaleY(1.18);transform-origin:0 3px">LBEMDAFC...</span></div>
<div class="t" style="left:2206.0px;top:1088.8px;font-size:19.5px;line-height:19.5px;color:#333;max-width:198.0px;overflow:hidden">客车</div>
<svg class="r" style="left:256px;top:1142px;" width="20" height="20" viewBox="0 0 20 20"><rect x="1.3" y="1.3" width="17.4" height="17.4" rx="3.2" fill="#fff" stroke="#6d6d6d" stroke-width="1.5"/></svg>
<div class="t" style="left:556.0px;top:1142.3px;font-size:19.5px;line-height:19.5px;color:#333;max-width:1848.0px;overflow:hidden">未到账</div>
<div class="t" style="left:706.0px;top:1142.3px;font-size:19.5px;line-height:19.5px;color:#337ab7;max-width:1698.0px;overflow:hidden">查看</div>
<div class="t" style="left:856.0px;top:1142.3px;font-size:19.5px;line-height:19.5px;color:#333;max-width:1548.0px;overflow:hidden">审核通过</div>
<div class="t" style="left:1006.0px;top:1142.3px;font-size:19.5px;line-height:19.5px;color:#333;max-width:1398.0px;overflow:hidden"><span style="display:inline-block;transform:scaleY(1.18);transform-origin:0 3px">5</span></div>
<div class="t" style="left:1156.0px;top:1142.3px;font-size:19.5px;line-height:19.5px;color:#337ab7;max-width:1248.0px;overflow:hidden"><span style="display:inline-block;transform:scaleY(1.18);transform-origin:0 3px">1</span></div>
<div class="t" style="left:1306.0px;top:1142.3px;font-size:19.5px;line-height:19.5px;color:#337ab7;max-width:1098.0px;overflow:hidden"><span style="display:inline-block;transform:scaleY(1.18);transform-origin:0 3px">0</span></div>
<div class="t" style="left:1456.0px;top:1142.3px;font-size:19.5px;line-height:19.5px;color:#333;max-width:948.0px;overflow:hidden">王资帅</div>
<div class="t" style="left:1756.0px;top:1142.3px;font-size:19.5px;line-height:19.5px;color:#337ab7;max-width:648.0px;overflow:hidden">鲁<span style="display:inline-block;transform:scaleY(1.18);transform-origin:0 3px">B-P06W8</span></div>
<div class="t" style="left:1906.0px;top:1142.3px;font-size:19.5px;line-height:19.5px;color:#337ab7;max-width:498.0px;overflow:hidden"><span style="display:inline-block;transform:scaleY(1.18);transform-origin:0 3px">LVM1B1A1...</span></div>
<div class="t" style="left:2206.0px;top:1142.3px;font-size:19.5px;line-height:19.5px;color:#333;max-width:198.0px;overflow:hidden">客车</div>
<svg class="r" style="left:256px;top:1195px;" width="20" height="20" viewBox="0 0 20 20"><rect x="1.3" y="1.3" width="17.4" height="17.4" rx="3.2" fill="#fff" stroke="#6d6d6d" stroke-width="1.5"/></svg>
<div class="t" style="left:706.0px;top:1195.7px;font-size:19.5px;line-height:19.5px;color:#337ab7;max-width:1698.0px;overflow:hidden">查看</div>
<div class="t" style="left:856.0px;top:1195.7px;font-size:19.5px;line-height:19.5px;color:#333;max-width:1548.0px;overflow:hidden">待审核</div>
<div class="t" style="left:1006.0px;top:1195.7px;font-size:19.5px;line-height:19.5px;color:#333;max-width:1398.0px;overflow:hidden"><span style="display:inline-block;transform:scaleY(1.18);transform-origin:0 3px">6</span></div>
<div class="t" style="left:1156.0px;top:1195.7px;font-size:19.5px;line-height:19.5px;color:#337ab7;max-width:1248.0px;overflow:hidden"><span style="display:inline-block;transform:scaleY(1.18);transform-origin:0 3px">1</span></div>
<div class="t" style="left:1306.0px;top:1195.7px;font-size:19.5px;line-height:19.5px;color:#337ab7;max-width:1098.0px;overflow:hidden"><span style="display:inline-block;transform:scaleY(1.18);transform-origin:0 3px">0</span></div>
<div class="t" style="left:1456.0px;top:1195.7px;font-size:19.5px;line-height:19.5px;color:#333;max-width:948.0px;overflow:hidden">张振文</div>
<div class="t" style="left:1756.0px;top:1195.7px;font-size:19.5px;line-height:19.5px;color:#337ab7;max-width:648.0px;overflow:hidden">鲁<span style="display:inline-block;transform:scaleY(1.18);transform-origin:0 3px">B-60D9L</span></div>
<div class="t" style="left:1906.0px;top:1195.7px;font-size:19.5px;line-height:19.5px;color:#337ab7;max-width:498.0px;overflow:hidden"><span style="display:inline-block;transform:scaleY(1.18);transform-origin:0 3px">LSGZR5352...</span></div>
<div class="t" style="left:2206.0px;top:1195.7px;font-size:19.5px;line-height:19.5px;color:#333;max-width:198.0px;overflow:hidden">客车</div>
<svg class="r" style="left:256px;top:1249px;" width="20" height="20" viewBox="0 0 20 20"><rect x="1.3" y="1.3" width="17.4" height="17.4" rx="3.2" fill="#fff" stroke="#6d6d6d" stroke-width="1.5"/></svg>
<div class="t" style="left:706.0px;top:1249.1px;font-size:19.5px;line-height:19.5px;color:#337ab7;max-width:1698.0px;overflow:hidden">查看</div>
<div class="t" style="left:856.0px;top:1249.1px;font-size:19.5px;line-height:19.5px;color:#333;max-width:1548.0px;overflow:hidden">待审核</div>
<div class="t" style="left:1006.0px;top:1249.1px;font-size:19.5px;line-height:19.5px;color:#333;max-width:1398.0px;overflow:hidden"><span style="display:inline-block;transform:scaleY(1.18);transform-origin:0 3px">7</span></div>
<div class="t" style="left:1156.0px;top:1249.1px;font-size:19.5px;line-height:19.5px;color:#337ab7;max-width:1248.0px;overflow:hidden"><span style="display:inline-block;transform:scaleY(1.18);transform-origin:0 3px">0</span></div>
<div class="t" style="left:1306.0px;top:1249.1px;font-size:19.5px;line-height:19.5px;color:#337ab7;max-width:1098.0px;overflow:hidden"><span style="display:inline-block;transform:scaleY(1.18);transform-origin:0 3px">0</span></div>
<div class="t" style="left:1456.0px;top:1249.1px;font-size:19.5px;line-height:19.5px;color:#333;max-width:948.0px;overflow:hidden">张振文</div>
<div class="t" style="left:1756.0px;top:1249.1px;font-size:19.5px;line-height:19.5px;color:#337ab7;max-width:648.0px;overflow:hidden">鲁<span style="display:inline-block;transform:scaleY(1.18);transform-origin:0 3px">B*-*</span></div>
<div class="t" style="left:1906.0px;top:1249.1px;font-size:19.5px;line-height:19.5px;color:#337ab7;max-width:498.0px;overflow:hidden"><span style="display:inline-block;transform:scaleY(1.18);transform-origin:0 3px">L6T79T2E6...</span></div>
<div class="t" style="left:2206.0px;top:1249.1px;font-size:19.5px;line-height:19.5px;color:#333;max-width:198.0px;overflow:hidden">客车</div>
<svg class="r" style="left:256px;top:1302px;" width="20" height="20" viewBox="0 0 20 20"><rect x="1.3" y="1.3" width="17.4" height="17.4" rx="3.2" fill="#fff" stroke="#6d6d6d" stroke-width="1.5"/></svg>
<div class="t" style="left:556.0px;top:1302.5px;font-size:19.5px;line-height:19.5px;color:#333;max-width:1848.0px;overflow:hidden">未到账</div>
<div class="t" style="left:706.0px;top:1302.5px;font-size:19.5px;line-height:19.5px;color:#337ab7;max-width:1698.0px;overflow:hidden">查看</div>
<div class="t" style="left:856.0px;top:1302.5px;font-size:19.5px;line-height:19.5px;color:#333;max-width:1548.0px;overflow:hidden">审核通过</div>
<div class="t" style="left:1006.0px;top:1302.5px;font-size:19.5px;line-height:19.5px;color:#333;max-width:1398.0px;overflow:hidden"><span style="display:inline-block;transform:scaleY(1.18);transform-origin:0 3px">8</span></div>
<div class="t" style="left:1156.0px;top:1302.5px;font-size:19.5px;line-height:19.5px;color:#337ab7;max-width:1248.0px;overflow:hidden"><span style="display:inline-block;transform:scaleY(1.18);transform-origin:0 3px">1</span></div>
<div class="t" style="left:1306.0px;top:1302.5px;font-size:19.5px;line-height:19.5px;color:#337ab7;max-width:1098.0px;overflow:hidden"><span style="display:inline-block;transform:scaleY(1.18);transform-origin:0 3px">0</span></div>
<div class="t" style="left:1456.0px;top:1302.5px;font-size:19.5px;line-height:19.5px;color:#333;max-width:948.0px;overflow:hidden">张振文</div>
<div class="t" style="left:1756.0px;top:1302.5px;font-size:19.5px;line-height:19.5px;color:#337ab7;max-width:648.0px;overflow:hidden">鲁<span style="display:inline-block;transform:scaleY(1.18);transform-origin:0 3px">B*-*</span></div>
<div class="t" style="left:1906.0px;top:1302.5px;font-size:19.5px;line-height:19.5px;color:#337ab7;max-width:498.0px;overflow:hidden"><span style="display:inline-block;transform:scaleY(1.18);transform-origin:0 3px">L6T79P2N7...</span></div>
<div class="t" style="left:2206.0px;top:1302.5px;font-size:19.5px;line-height:19.5px;color:#333;max-width:198.0px;overflow:hidden">客车</div>
<div class="r" style="left:1466.0px;top:90.0px;width:490.0px;height:66.0px;background:#fff;border-radius:7px;box-shadow:0 3px 8px rgba(0,0,0,.28)"></div>
<div class="t" style="left:1489.0px;top:113.5px;font-size:17px;line-height:17px;color:#111;"><span style="display:inline-block;font-size:18.5px;transform:translateY(1.5px)">鲁</span><span style="display:inline-block;transform:scaleY(1.1);transform-origin:0 2.6px">B-6V18A</span></div>
<div class="r" style="left:1578.0px;top:108.0px;width:1.5px;height:27.0px;background:#111"></div>
<div class="t" style="left:1735.5px;top:112.5px;font-size:19px;line-height:19px;color:#555;"><span style="display:inline-block;transform:scaleY(1.12);transform-origin:0 2.8px">0/0</span></div>
<svg class="r" style="left:1812px;top:114px;" width="24" height="14" viewBox="0 0 24 14"><path d="M2 12L12 2L22 12" fill="none" stroke="#b9b9b9" stroke-width="1.6"/></svg>
<svg class="r" style="left:1860px;top:116px;" width="24" height="14" viewBox="0 0 24 14"><path d="M2 2L12 12L22 2" fill="none" stroke="#b9b9b9" stroke-width="1.6"/></svg>
<svg class="r" style="left:1909px;top:112px;" width="22" height="22" viewBox="0 0 22 22"><path d="M2 2L20 20M20 2L2 20" fill="none" stroke="#222" stroke-width="1.8"/></svg>
<div class="r" style="left:1476.0px;top:83.0px;width:314.0px;height:81.0px;border:4.7px solid #ff1c1c;border-radius:3px"></div>
<div class="r" style="left:2179.5px;top:1146.5px;width:140.5px;height:63.0px;background:rgba(38,42,51,.9);border-radius:32px;box-shadow:0 2px 6px rgba(0,0,0,.3)"></div>
<svg class="r" style="left:2195px;top:1156px;" width="12" height="12" viewBox="0 0 12 12"><path d="M1.5 6L6 1.5L10.5 6M6 2V11" fill="none" stroke="#3aaee8" stroke-width="2.2"/></svg>
<div class="t" style="left:2215.0px;top:1154.2px;font-size:16.5px;line-height:16.5px;color:#eee;"><b>0.4</b><span style="font-size:14px;color:#aaa;margin-left:1px">K/s</span></div>
<svg class="r" style="left:2195px;top:1188px;" width="12" height="12" viewBox="0 0 12 12"><path d="M1.5 6L6 10.5L10.5 6M6 10V1" fill="none" stroke="#2fbf3a" stroke-width="2.2"/></svg>
<div class="t" style="left:2215.0px;top:1186.8px;font-size:16.5px;line-height:16.5px;color:#eee;"><b>2.1</b><span style="font-size:14px;color:#aaa;margin-left:1px">K/s</span></div>
<svg class="r" style="left:2268px;top:1133px;filter:drop-shadow(0 2px 3px rgba(0,0,0,.3))" width="92" height="92" viewBox="0 0 92 92"><defs><linearGradient id="ag" x1="0" y1="0" x2="0" y2="1"><stop offset="0" stop-color="#3fd6c9"/><stop offset=".6" stop-color="#6fd08a"/><stop offset="1" stop-color="#dcd23a"/></linearGradient></defs><circle cx="45.5" cy="45" r="44.3" fill="#575e6b"/><path d="M45.5 7 A38 38 0 1 1 35.3 81.6" fill="none" stroke="url(#ag)" stroke-width="2.4"/><g fill="none" stroke="#eaeaea" stroke-width="1.7"><path d="M34.5 30.8H23.3L22 43.2C23.6 42 25.6 41.4 27.6 41.4C32 41.4 35 44.5 35 49.2C35 54.2 31.7 57.3 27.3 57.3C24.6 57.3 22.3 56.2 20.8 54.3"/><path d="M52.5 57.3V30.5L39.5 50H57.5"/><path d="M61.5 57L72 46.5"/><circle cx="63.3" cy="48.6" r="2"/><circle cx="70.2" cy="55" r="2"/></g></svg>
</body></html>
